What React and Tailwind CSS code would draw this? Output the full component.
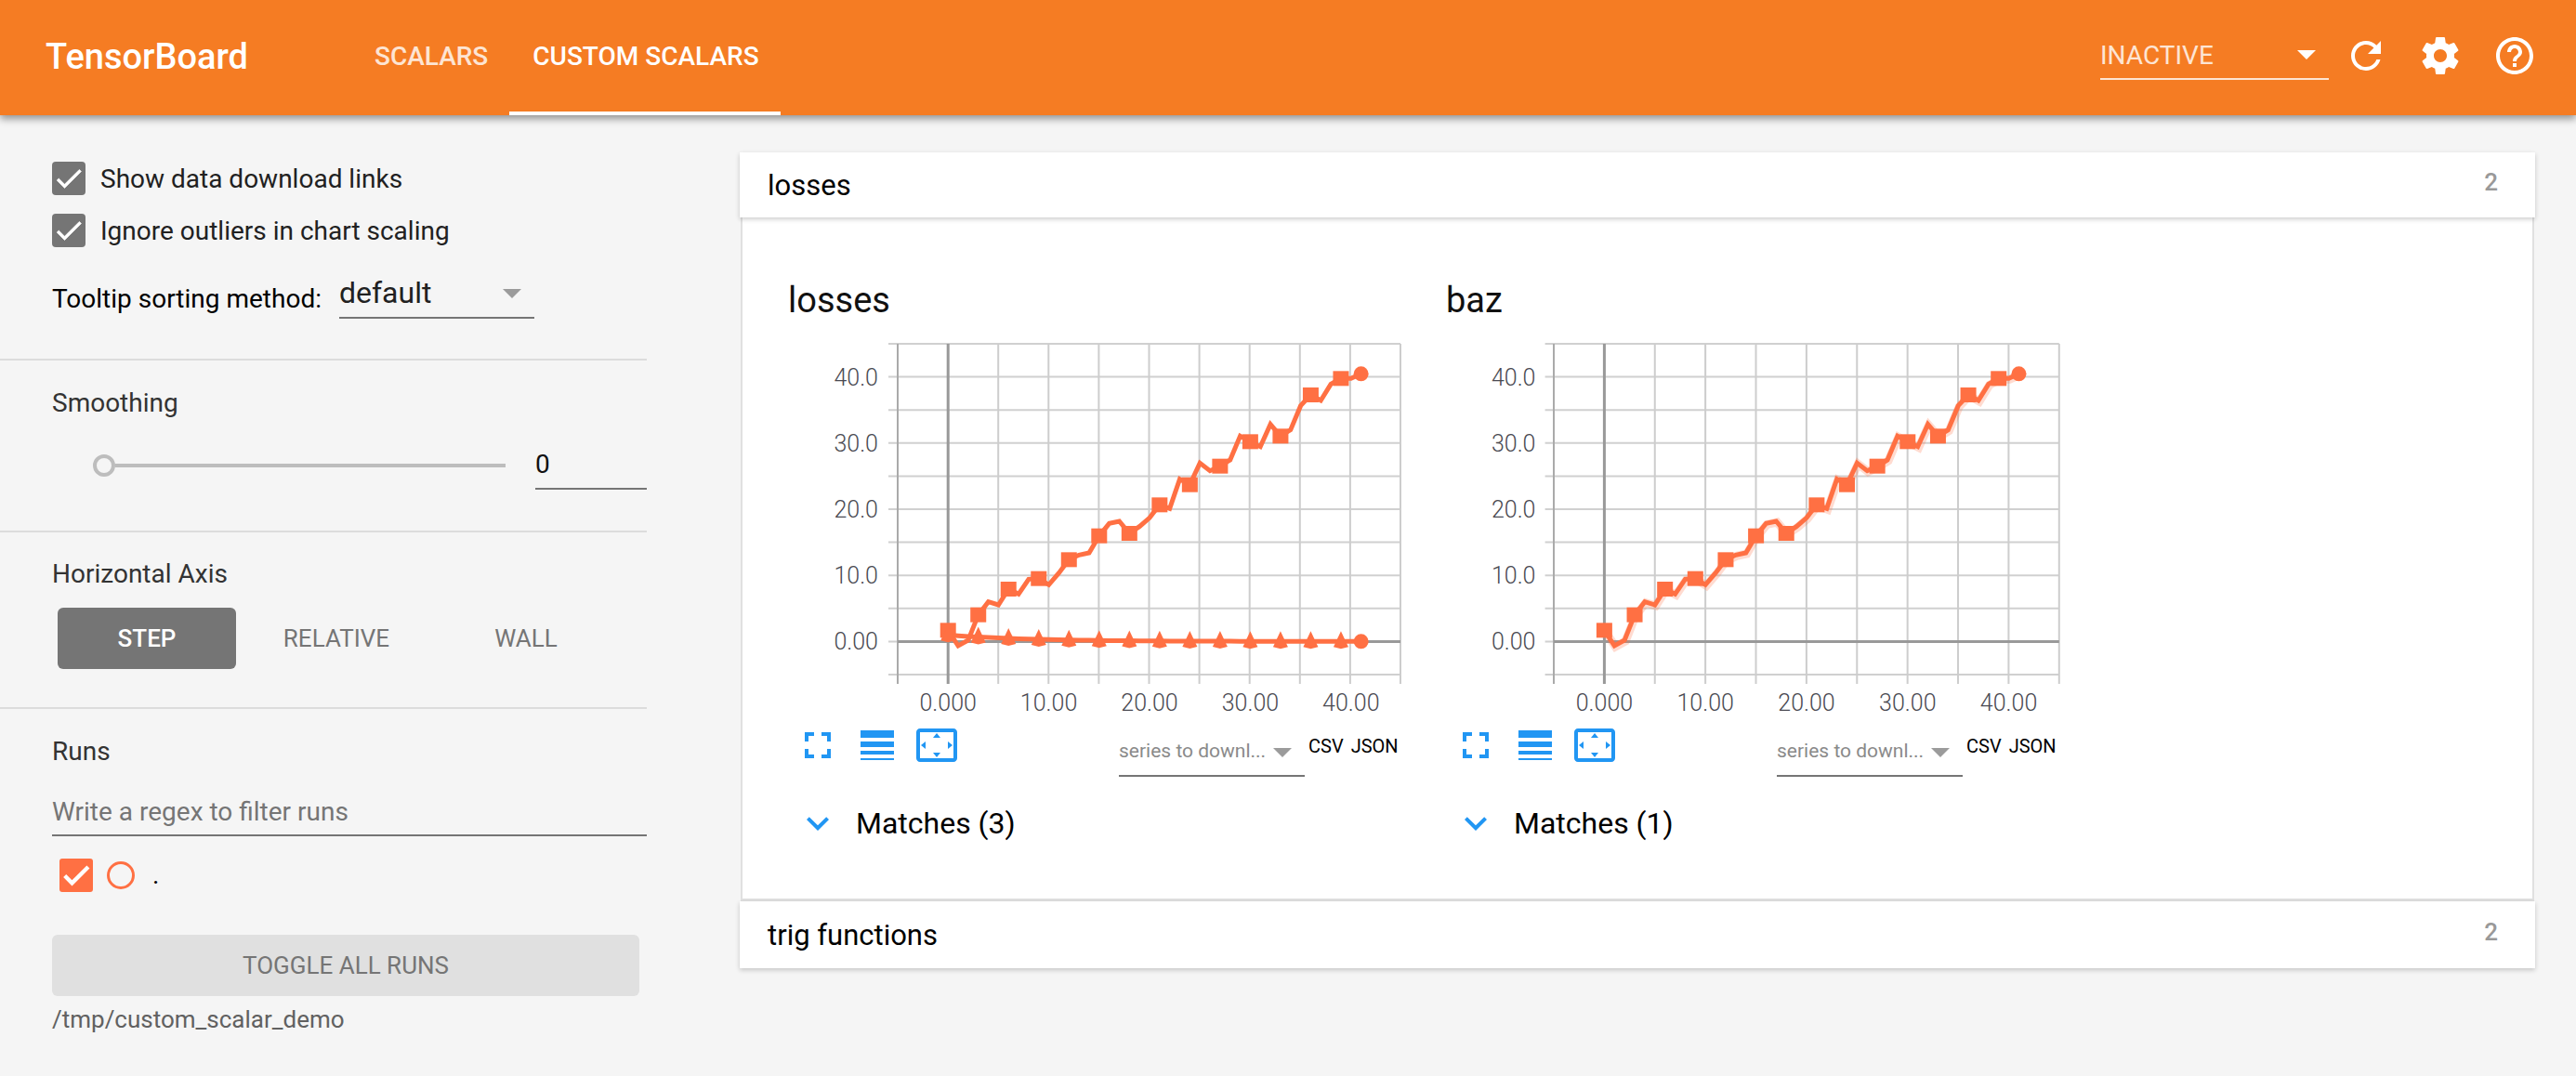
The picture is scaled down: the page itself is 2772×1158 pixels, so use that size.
import React from "react";

const Z = [985,1035,1017,935,893,903,852,868,820,818,838,800,757,742,735,680,640,633,672,650,622,580,592,497,515,445,470,455,435,358,376,392,320,358,338,260,225,243,190,172,172,157];
const FLAT = Z.map((_, i) => 1021 - 21 * Math.exp(-i / 8));
const toY = (z) => z / 3 - 10;

function Path({ d, className = "", size = 48, vb = 24, bold = 0 }) {
  return (
    <svg width={size} height={size} viewBox={`0 0 ${vb} ${vb}`} className={`shrink-0 fill-current ${className}`}>
      <path d={d} stroke={bold ? "currentColor" : "none"} strokeWidth={bold} />
    </svg>
  );
}

const CHECK = "M9 16.17L4.83 12l-1.42 1.41L9 19 21 7l-1.41-1.41z";

function Series({ zs, marker, zero, step }) {
  const pts = zs.map((z, i) => [zero + i * step, toY(z)]);
  return (
    <g>
      <polyline points={pts.map((p) => p.join(",")).join(" ")} fill="none" stroke="#ff7043" strokeWidth="5" strokeLinejoin="miter" />
      {pts.map(([x, y], i) =>
        i % 3 === 0 && i < 40 ? (
          marker === "square" ? (
            <rect key={i} x={x - 8.5} y={y - 8} width="17" height="16" fill="#ff7043" />
          ) : (
            <polygon key={i} points={`${x},${y - 11} ${x + 8},${y + 6} ${x},${y + 8} ${x - 8},${y + 6}`} fill="#ff7043" />
          )
        ) : null
      )}
      <ellipse cx={pts[41][0]} cy={pts[41][1]} rx="8" ry="8" fill="#ff7043" />
    </g>
  );
}

function Plot({ axis, tick, zero, right, labelX, flat, band }) {
  const spacing = zero - axis;
  const vs = Array.from({ length: 11 }, (_, i) => axis + i * ((right - axis) / 10));
  const hs = Array.from({ length: 11 }, (_, i) => 10 + i * 35.6);
  const step = spacing / 5;
  const yLabels = [["40.0", 1], ["30.0", 3], ["20.0", 5], ["10.0", 7], ["0.00", 9]];
  const xLabels = ["0.000", "10.00", "20.00", "30.00", "40.00"];
  return (
    <svg width="680" height="410" viewBox="0 0 680 410" className="block font-['Roboto',sans-serif]">
      {hs.map((y, i) => (
        <line key={i} x1={tick} x2={right} y1={y} y2={y} stroke="#d0d0d0" strokeWidth="2" />
      ))}
      {vs.map((x, i) => (
        <line key={i} x1={x} x2={x} y1="10" y2="376" stroke={i === 0 ? "#aaaaaa" : "#cdcdcd"} strokeWidth="2" />
      ))}
      <line x1={zero} x2={zero} y1="10" y2="376" stroke="#999999" strokeWidth="3" />
      <line x1={axis} x2={right} y1={hs[9]} y2={hs[9]} stroke="#999999" strokeWidth="3" />
      {band && (
        <polyline
          points={Z.map((z, i) => `${zero + i * step + 1},${toY(z) + 1}`).join(" ")}
          fill="none"
          stroke="#ff7043"
          strokeOpacity="0.25"
          strokeWidth="9"
        />
      )}
      <Series zs={Z} marker="square" zero={zero} step={step} />
      {flat && <Series zs={FLAT} marker="triangle" zero={zero} step={step} />}
      {yLabels.map(([t, i]) => (
        <text key={t} x={labelX} y={hs[i] + 9} textAnchor="end" fontSize="25" fontWeight="300" fill="#4a4a52">
          {t}
        </text>
      ))}
      {xLabels.map((t, i) => (
        <text key={t} x={zero + i * 2 * spacing} y="405" textAnchor="middle" fontSize="25" fontWeight="300" fill="#4a4a52">
          {t}
        </text>
      ))}
    </svg>
  );
}

function ChartCol({ title, matches, plot }) {
  return (
    <div className="w-[708px] shrink-0">
      <div className="-ml-[1px] mt-[69px] h-[40px] text-[38px] leading-[40px] text-[#111]">{title}</div>
      <div className="mt-[17px]">
        <Plot {...plot} />
      </div>
      <div className="mt-[8px] flex h-[58px] items-start pl-[7px]">
        <div className="flex gap-[16px] text-[#2196f3]">
          <Path d="M7 14H5v5h5v-2H7v-3zm-2-4h2V7h3V5H5v5zm12 7h-3v2h5v-5h-2v3zM14 5v2h3v3h2V5h-5z" />
          <Path d="M3 17h18v-2H3v2zm0 3h18v-1H3v1zm0-7h18v-3H3v3zm0-9v4h18V4H3z" />
          <Path d="M12.01 5.5L10 8h4l-1.99-2.5zM18 10v4l2.5-1.99L18 10zM6 10l-2.5 2.01L6 14v-4zm8 6h-4l2.01 2.5L14 16zm7-13H3c-1.1 0-2 .9-2 2v14c0 1.1.9 2 2 2h18c1.1 0 2-.9 2-2V5c0-1.1-.9-2-2-2zm0 16.01H3V4.99h18v14.02z" />
        </div>
        <div className="ml-[172px] flex h-[58px] w-[200px] items-center justify-between border-b-2 border-[#757575] pr-[14px] pt-[6px] text-[21px] text-[#8a8a8a]">
          <span>series to downl...</span>
          <span className="mt-[2px] h-0 w-0 border-x-[10px] border-t-[10px] border-x-transparent border-t-[#9b9b9b]" />
        </div>
        <div className="ml-[4px] flex gap-[8px] pt-[10px] text-[20px] leading-[30px] text-black">
          <span>CSV</span>
          <span>JSON</span>
        </div>
      </div>
      <div className="mt-[26px] flex h-[48px] items-center pl-[7px]">
        <Path className="text-[#2196f3]" d="M16.59 8.59L12 13.17 7.41 8.59 6 10l6 6 6-6z" />
        <span className="ml-[17px] text-[32px] leading-[48px] text-black">{matches}</span>
      </div>
    </div>
  );
}

function Check({ label }) {
  return (
    <div className="flex h-[36px] items-center">
      <span className="flex h-[36px] w-[36px] items-center justify-center rounded-[4px] bg-[#757575] text-white">
        <Path size={36} d={CHECK} bold={0.4} />
      </span>
      <span className="ml-[16px] pt-[2px] text-[28px] text-[#212121]">{label}</span>
    </div>
  );
}

function Section({ children, className = "" }) {
  return <section className={`border-b-2 border-[#dcdcdc] pl-[56px] ${className}`}>{children}</section>;
}

function Sidebar() {
  return (
    <aside className="w-[696px] shrink-0">
      <Section className="pt-[50px] pb-[44px]">
        <div className="flex flex-col gap-[20px]">
          <Check label="Show data download links" />
          <Check label="Ignore outliers in chart scaling" />
        </div>
        <div className="mt-[36px] flex h-[40px] items-center">
          <span className="text-[28px] text-black">Tooltip sorting method:</span>
          <div className="ml-[19px] flex h-[42px] w-[210px] items-start justify-between border-b-2 border-[#757575] pr-[14px]">
            <span className="-mt-[1px] text-[32px] leading-[30px] text-[#212121]">default</span>
            <span className="mt-[10px] h-0 w-0 border-x-[10px] border-t-[10px] border-x-transparent border-t-[#9b9b9b]" />
          </div>
        </div>
      </Section>
      <Section className="pt-[30px] pb-[44px]">
        <div className="text-[28px] leading-[32px] text-[#333]">Smoothing</div>
        <div className="mt-[25px] flex h-[52px] items-center">
          <span className="ml-[44px] h-[24px] w-[24px] rounded-full border-4 border-[#bdbdbd]" />
          <span className="h-[4px] w-[420px] bg-[#bdbdbd]" />
          <div className="ml-[32px] h-[52px] w-[120px] border-b-2 border-[#757575] text-[28px] leading-[50px] text-[#111]">0</div>
        </div>
      </Section>
      <Section className="pt-[29px] pb-[41px]">
        <div className="text-[28px] leading-[32px] text-[#333]">Horizontal Axis</div>
        <div className="mt-[20px] ml-[6px] flex gap-[12px] text-[26px]">
          <div className="flex h-[66px] w-[192px] items-center justify-center rounded-[6px] bg-[#757575] font-medium text-white">STEP</div>
          <div className="flex h-[66px] w-[192px] items-center justify-center text-[#757575]">RELATIVE</div>
          <div className="flex h-[66px] w-[192px] items-center justify-center text-[#757575]">WALL</div>
        </div>
      </Section>
      <div className="pl-[56px] pt-[30px]">
        <div className="text-[28px] leading-[32px] text-[#333]">Runs</div>
        <div className="mt-[25px] flex h-[50px] items-center border-b-2 border-[#757575] text-[28px] text-[#757575]">Write a regex to filter runs</div>
        <div className="mt-[24px] flex h-[36px] items-center pl-[8px]">
          <span className="flex h-[36px] w-[36px] items-center justify-center rounded-[3px] bg-[#ff7043] text-white">
            <Path size={36} d={CHECK} bold={0.9} />
          </span>
          <span className="ml-[15px] h-[30px] w-[30px] rounded-full border-[3px] border-[#ff7043]" />
          <span className="ml-[19px] text-[28px] leading-[36px] text-black">.</span>
        </div>
        <div className="mt-[46px] flex h-[66px] w-[632px] items-center justify-center rounded-[6px] bg-[#e0e0e0] text-[26px] text-[#757575]">TOGGLE ALL RUNS</div>
        <div className="mt-[9px] text-[26px] leading-[32px] text-[#616161]">/tmp/custom_scalar_demo</div>
      </div>
    </aside>
  );
}

function PaneHead({ title, h }) {
  return (
    <div className={`relative flex items-center justify-between bg-white pl-[30px] pr-[40px] shadow-[0_2px_5px_rgba(0,0,0,0.2)] ${h}`}>
      <span className="pt-[2px] text-[31px] text-black">{title}</span>
      <span className="-mt-[6px] text-[26px] font-medium text-[#999]">2</span>
    </div>
  );
}

export default function App() {
  return (
    <div className="flex h-[1158px] flex-col overflow-hidden bg-[#f5f5f5] font-['Roboto',sans-serif]">
      <header className="relative z-10 flex h-[124px] shrink-0 items-stretch bg-[#f57c23] pl-[49px] pr-[42px] text-white shadow-[0_4px_8px_rgba(0,0,0,0.4)]">
        <div className="flex items-center pb-[2px] text-[38px] font-medium">TensorBoard</div>
        <nav className="ml-[111px] flex text-[28px] font-medium">
          <div className="flex items-center pb-[2px] pl-[25px] pr-[23px] text-white/80">SCALARS</div>
          <div className="flex items-center border-b-4 border-white pl-[25px] pr-[23px] pt-[2px]">CUSTOM SCALARS</div>
        </nav>
        <div className="ml-auto flex items-center pb-[4px]">
          <div className="flex h-[52px] w-[246px] items-center justify-between border-b-2 border-white/80 pr-[14px] text-[28px] text-white/80">
            <span className="pt-[2px]">INACTIVE</span>
            <span className="h-0 w-0 border-x-[10px] border-t-[10px] border-x-transparent border-t-white" />
          </div>
          <div className="ml-[16px] flex gap-[32px]">
            <Path d="M17.65 6.35C16.2 4.9 14.21 4 12 4c-4.42 0-7.99 3.58-7.99 8s3.57 8 7.99 8c3.73 0 6.84-2.55 7.73-6h-2.08c-.82 2.33-3.04 4-5.65 4-3.31 0-6-2.69-6-6s2.69-6 6-6c1.66 0 3.14.69 4.22 1.78L13 11h7V4l-2.35 2.35z" />
            <Path d="M19.43 12.98c.04-.32.07-.64.07-.98s-.03-.66-.07-.98l2.11-1.65c.19-.15.24-.42.12-.64l-2-3.46c-.12-.22-.39-.3-.61-.22l-2.49 1c-.52-.4-1.08-.73-1.69-.98l-.38-2.65C14.46 2.18 14.25 2 14 2h-4c-.25 0-.46.18-.49.42l-.38 2.65c-.61.25-1.17.59-1.69.98l-2.49-1c-.23-.09-.49 0-.61.22l-2 3.46c-.13.22-.07.49.12.64l2.11 1.65c-.04.32-.07.65-.07.98s.03.66.07.98l-2.11 1.65c-.19.15-.24.42-.12.64l2 3.46c.12.22.39.3.61.22l2.49-1c.52.4 1.08.73 1.69.98l.38 2.65c.03.24.24.42.49.42h4c.25 0 .46-.18.49-.42l.38-2.65c.61-.25 1.17-.59 1.69-.98l2.49 1c.23.09.49 0 .61-.22l2-3.46c.12-.22.07-.49-.12-.64l-2.11-1.65zM12 15.5c-1.93 0-3.5-1.57-3.5-3.5s1.57-3.5 3.5-3.5 3.5 1.57 3.5 3.5-1.57 3.5-3.5 3.5z" />
            <Path d="M11 18h2v-2h-2v2zm1-16C6.48 2 2 6.48 2 12s4.48 10 10 10 10-4.48 10-10S17.52 2 12 2zm0 18c-4.41 0-8-3.59-8-8s3.59-8 8-8 8 3.59 8 8-3.59 8-8 8zm0-14c-2.21 0-4 1.79-4 4h2c0-1.1.9-2 2-2s2 .9 2 2c0 2-3 1.75-3 5h2c0-2.25 3-2.5 3-5 0-2.21-1.79-4-4-4z" />
          </div>
        </div>
      </header>
      <div className="flex flex-1">
        <Sidebar />
        <main className="flex-1 pl-[100px] pr-[44px] pt-[40px]">
          <PaneHead title="losses" h="h-[70px] z-[1]" />
          <div className="mx-[1px] flex h-[736px] border-x-2 border-b-[3px] border-[#e0e0e0] bg-white pl-[50px]">
            <ChartCol
              title="losses"
              matches="Matches (3)"
              plot={{ axis: 117, tick: 107, zero: 171.2, right: 658, labelX: 96, flat: true }}
            />
            <ChartCol
              title="baz"
              matches="Matches (1)"
              plot={{ axis: 115, tick: 105.6, zero: 169.4, right: 658.8, labelX: 95.5, band: true }}
            />
          </div>
          <PaneHead title="trig functions" h="h-[72px]" />
        </main>
      </div>
    </div>
  );
}
